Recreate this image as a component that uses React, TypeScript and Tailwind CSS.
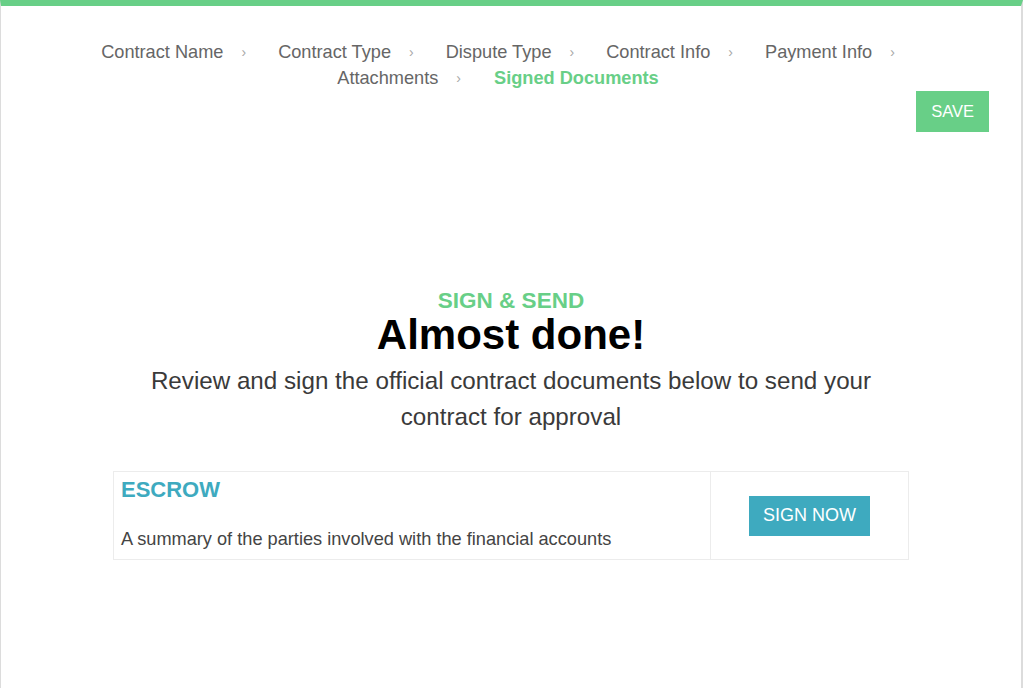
const steps = ["Contract Name", "Contract Type", "Dispute Type", "Contract Info", "Payment Info"];

function Chevron() {
  return <span className="ml-[18px] text-[14px] text-[#a8a8a8]">›</span>;
}

export default function App() {
  return (
    <div
      className="h-[688px] w-[1023px] overflow-hidden border-t-[6px] border-l border-r-2 border-[#dcdcdc] border-t-[#68cf87] bg-white"
      style={{ fontFamily: '"Liberation Sans", Arial, sans-serif' }}
    >
      {/* Step breadcrumb */}
      <div className="pt-[33px] pr-[26px] text-[18.2px] leading-[26px] text-[#666]">
        <div className="flex items-center justify-center gap-[32px]">
          {steps.map((step) => (
            <span key={step} className="flex items-center">
              <span>{step}</span>
              <Chevron />
            </span>
          ))}
        </div>
        <div className="flex items-center justify-center gap-[33px]">
          <span className="flex items-center">
            <span>Attachments</span>
            <Chevron />
          </span>
          <span className="font-bold text-[#68cf87]">Signed Documents</span>
        </div>
      </div>

      <div className="flex justify-end pr-[32px]">
        <button className="h-[41px] bg-[#68cf87] px-[15px] text-[16.5px] text-white">SAVE</button>
      </div>

      {/* Intro */}
      <div className="mt-[158px] text-center">
        <p className="text-[22.5px] font-bold leading-[22px] text-[#68cf87]">SIGN &amp; SEND</p>
        <h1 className="text-[42px] font-bold leading-[46px] text-black">Almost done!</h1>
        <p className="mx-auto mt-[5px] w-[750px] text-[24.2px] leading-[36px] text-[#3a3a3a]">
          Review and sign the official contract documents below to send your contract for approval
        </p>
      </div>

      {/* Documents */}
      <div className="mx-auto mt-[36px] flex w-[796px] border border-[#ececec]">
        <div className="w-[596px] px-[7px] pt-[5px] pb-[8px]">
          <p className="text-[22px] font-bold leading-[26px] text-[#3eaabf]">ESCROW</p>
          <p className="mt-[24px] text-[18.2px] leading-[24px] text-[#444]">
            A summary of the parties involved with the financial accounts
          </p>
        </div>
        <div className="flex flex-1 items-center justify-center border-l border-[#ececec]">
          <button className="h-[40px] bg-[#3eaabf] px-[14px] text-[18px] text-white">SIGN NOW</button>
        </div>
      </div>
    </div>
  );
}
